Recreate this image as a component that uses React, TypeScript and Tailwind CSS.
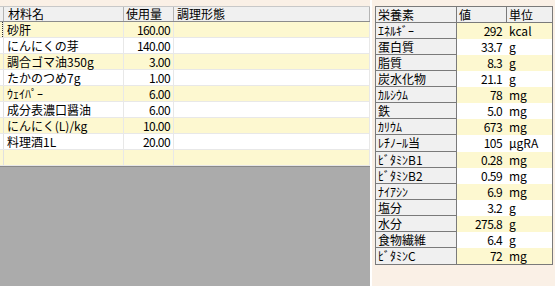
import React from "react";

const ingredients: [string, string][] = [
  ["砂肝", "160.00"],
  ["にんにくの芽", "140.00"],
  ["調合ゴマ油350g", "3.00"],
  ["たかのつめ7g", "1.00"],
  ["ｳｪｲﾊﾟｰ", "6.00"],
  ["成分表濃口醤油", "6.00"],
  ["にんにく(L)/kg", "10.00"],
  ["料理酒1L", "20.00"],
  ["", ""],
];

const nutrients: [string, string, string][] = [
  ["ｴﾈﾙｷﾞｰ", "292", "kcal"],
  ["蛋白質", "33.7", "g"],
  ["脂質", "8.3", "g"],
  ["炭水化物", "21.1", "g"],
  ["ｶﾙｼｳﾑ", "78", "mg"],
  ["鉄", "5.0", "mg"],
  ["ｶﾘｳﾑ", "673", "mg"],
  ["ﾚﾁﾉｰﾙ当", "105", "μgRA"],
  ["ﾋﾞﾀﾐﾝB1", "0.28", "mg"],
  ["ﾋﾞﾀﾐﾝB2", "0.59", "mg"],
  ["ﾅｲｱｼﾝ", "6.9", "mg"],
  ["塩分", "3.2", "g"],
  ["水分", "275.8", "g"],
  ["食物繊維", "6.4", "g"],
  ["ﾋﾞﾀﾐﾝC", "72", "mg"],
];

const font = { fontFamily: "'Noto Sans CJK JP', 'Noto Sans', sans-serif" };

function IngredientGrid() {
  return (
    <div className="flex w-[370px] flex-col pt-[6px]">
      <div className="flex h-[16px] border-y border-t-[#c8c8c8] border-b-[#8c8c8c] bg-[#f0f0f0] text-[12px] leading-[14px] text-black">
        <div className="w-[4px] border-r border-[#b4b4b4]" />
        <div className="w-[120px] border-r border-[#b4b4b4] pl-[4px]">材料名</div>
        <div className="w-[50px] border-r border-[#b4b4b4] pl-[2px]">使用量</div>
        <div className="flex-1 border-r border-[#b4b4b4] pl-[3px]">調理形態</div>
      </div>
      {ingredients.map(([name, amount], i) => (
        <div
          key={i}
          className={"flex h-[16px] border-b border-[#e8e8e8] text-[12px] leading-[15px] text-black " + (i % 2 === 0 ? "bg-[#fdf8d0]" : "bg-white")}
        >
          <div className="flex w-[4px] items-stretch border-r border-[#e0e0e0]">
            {i === 0 ? <div className="ml-[2px] w-px border-l border-dotted border-[#333]" /> : null}
          </div>
          <div className="w-[120px] border-r border-[#e8e8e8] pl-[3px]">{name}</div>
          <div className="w-[50px] border-r border-[#e8e8e8] pr-[3px] text-right tracking-[-0.6px]">{amount}</div>
          <div className="flex-1 border-r border-[#e8e8e8]" />
        </div>
      ))}
      <div className="flex-1 border-t border-[#8a8a8a] bg-[#ababab]" />
    </div>
  );
}

function NutrientTable() {
  return (
    <div className="flex flex-1 border-l-2 border-l-white pl-[3px] pt-[6px]">
      <div className="flex h-[259px] w-[178px] flex-col border border-[#7a7a7a] text-[12px] text-black">
        <div className="flex h-[16px] border-b border-[#7a7a7a] bg-[#f0f0f0] leading-[15px]">
          <div className="w-[81px] border-r border-[#7a7a7a] pl-[2px]">栄養素</div>
          <div className="w-[50px] border-r border-[#7a7a7a] pl-[2px]">値</div>
          <div className="flex-1 pl-[2px]">単位</div>
        </div>
        <div className="grid flex-1 grid-rows-[repeat(15,1fr)]">
          {nutrients.map(([label, value, unit], i) => (
            <div key={label} className={"flex leading-[15px] " + (i % 2 === 0 ? "bg-[#fdf8d0]" : "bg-white")}>
              <div className={"w-[81px] border-r border-[#7a7a7a] bg-[#f0f0f0] pl-[2px] " + (i < nutrients.length - 1 ? "border-b" : "")}>{label}</div>
              <div className="w-[50px] pr-[5px] text-right tracking-[-0.6px]">{value}</div>
              <div className="flex-1 pl-[2px]">{unit}</div>
            </div>
          ))}
        </div>
      </div>
    </div>
  );
}

export default function App() {
  return (
    <div className="flex h-[286px] w-[555px] overflow-hidden bg-[#faf0e6]" style={font}>
      <IngredientGrid />
      <NutrientTable />
    </div>
  );
}
